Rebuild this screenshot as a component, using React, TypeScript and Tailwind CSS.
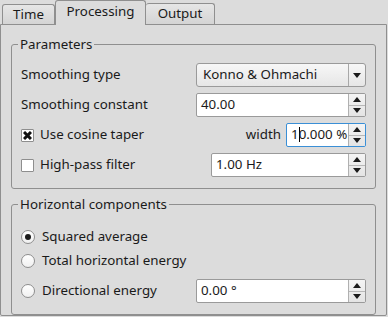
import React from "react";

const font = { fontFamily: '"Noto Sans", "DejaVu Sans", sans-serif' };

function Up() {
  return (
    <svg width="8" height="5" viewBox="0 0 8 5"><path d="M0 5 L4 0 L8 5 Z" fill="#1a1a1a" /></svg>
  );
}
function Down() {
  return (
    <svg width="8" height="5" viewBox="0 0 8 5"><path d="M0 0 L8 0 L4 5 Z" fill="#1a1a1a" /></svg>
  );
}

function SpinBox({ value, w, focused, caret }: { value: string; w: string; focused?: boolean; caret?: boolean }) {
  return (
    <div className={`flex h-[24px] ${w} rounded-[2px] border ${focused ? "border-[#3a8fd6]" : "border-[#9a9a9a]"} bg-white overflow-hidden`}>
      <div className="flex flex-1 items-center pl-[4px] text-[13.33px] text-[#1a1a1a] whitespace-nowrap">
        {caret ? (
          <span>
            1<span className="inline-block w-px h-[15px] bg-black align-middle -mt-[2px] -mr-px" />0.000 %
          </span>
        ) : (
          value
        )}
      </div>
      <div className="flex w-[17px] flex-col border-l border-[#b0b0b0] bg-gradient-to-b from-[#f4f4f4] to-[#e4e4e4]">
        <div className="flex flex-1 items-center justify-center border-b border-[#b8b8b8]"><Up /></div>
        <div className="flex flex-1 items-center justify-center"><Down /></div>
      </div>
    </div>
  );
}

function CheckBox({ checked }: { checked?: boolean }) {
  return (
    <div className="flex h-[13px] w-[13px] items-center justify-center rounded-[1px] border border-[#8e8e8e] bg-white">
      {checked && (
        <svg width="9" height="9" viewBox="0 0 9 9">
          <path d="M1 1 L8 8 M8 1 L1 8" stroke="#111" strokeWidth="3" />
        </svg>
      )}
    </div>
  );
}

function Radio({ checked }: { checked?: boolean }) {
  return (
    <div className="flex h-[14px] w-[14px] items-center justify-center rounded-full border border-[#8e8e8e] bg-gradient-to-b from-white to-[#f0f0f0]">
      {checked && <div className="h-[6px] w-[6px] rounded-full bg-[#1a1a1a]" />}
    </div>
  );
}

function Group({ title, children, h }: { title: string; children: React.ReactNode; h: string }) {
  return (
    <div className={`relative ${h} rounded-[3px] border border-[#8f8f8f]`}>
      <div className="absolute -top-[10px] left-[6px] bg-[#dcdcdc] px-[2px] text-[13.33px] leading-[18px] text-[#1a1a1a]">{title}</div>
      {children}
    </div>
  );
}

export default function App() {
  return (
    <div className="h-[317px] w-[388px] bg-[#dcdcdc] text-[13.33px] text-[#1a1a1a]" style={font}>
      {/* tab bar */}
      <div className="flex h-[24px] items-end pl-[2px]">
        <div className="flex h-[20px] w-[53px] items-center justify-center rounded-t-[3px] border border-b-0 border-[#8f8f8f] bg-gradient-to-b from-[#e6e6e6] to-[#d4d4d4]">Time</div>
        <div className="relative z-10 -mb-px flex h-[25px] w-[91px] items-center justify-center rounded-t-[3px] border border-b-0 border-[#8f8f8f] bg-[#dcdcdc] pb-[3px]">Processing</div>
        <div className="flex h-[21px] w-[69px] items-center justify-center rounded-t-[3px] border border-b-0 border-l-0 border-[#8f8f8f] bg-gradient-to-b from-[#e6e6e6] to-[#d4d4d4]">Output</div>
      </div>
      {/* pane */}
      <div className="h-[292px] w-[387px] rounded-b-[2px] border border-[#8f8f8f] px-[10px] pt-[19px]">
        <Group title="Parameters" h="h-[145px]">
          <div className="flex flex-col gap-[6px] px-[9px] pt-[18px]">
            <div className="flex h-[24px] items-center">
              <div className="w-[175px]">Smoothing type</div>
              <div className="flex h-[24px] flex-1 items-center rounded-[3px] border border-[#9a9a9a] bg-gradient-to-b from-[#f7f7f7] to-[#e6e6e6]">
                <div className="flex-1 pl-[6px]">Konno &amp; Ohmachi</div>
                <div className="flex h-full w-[17px] items-center justify-center border-l border-[#a8a8a8]"><Down /></div>
              </div>
            </div>
            <div className="flex h-[24px] items-center">
              <div className="w-[175px]">Smoothing constant</div>
              <SpinBox value="40.00" w="flex-1" />
            </div>
            <div className="flex h-[24px] items-center">
              <CheckBox checked />
              <div className="ml-[6px] flex-1">Use cosine taper</div>
              <div className="mr-[5px]">width</div>
              <SpinBox value="10.000 %" w="w-[80px]" focused caret />
            </div>
            <div className="flex h-[24px] items-center">
              <CheckBox />
              <div className="ml-[6px] flex-1">High-pass filter</div>
              <SpinBox value="1.00 Hz" w="w-[155px]" />
            </div>
          </div>
        </Group>
        <div className="h-[15px]" />
        <Group title="Horizontal components" h="h-[111px]">
          <div className="flex flex-col px-[9px] pt-[20px]">
            <div className="flex h-[24px] items-center">
              <Radio checked />
              <div className="ml-[7px]">Squared average</div>
            </div>
            <div className="flex h-[24px] items-center">
              <Radio />
              <div className="ml-[7px]">Total horizontal energy</div>
            </div>
            <div className="mt-[6px] flex h-[24px] items-center">
              <Radio />
              <div className="ml-[7px] flex-1">Directional energy</div>
              <SpinBox value="0.00 °" w="w-[170px]" />
            </div>
          </div>
        </Group>
      </div>
    </div>
  );
}
